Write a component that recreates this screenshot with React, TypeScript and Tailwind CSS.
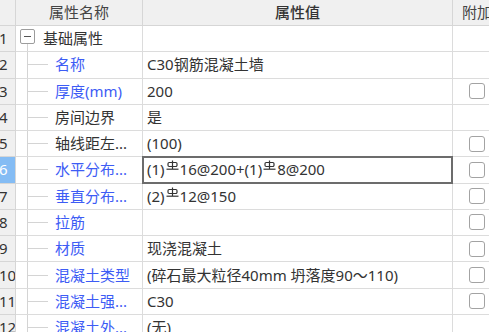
import React from "react";

type Row = {
  no: number;
  name: string;
  blue?: boolean;
  value: React.ReactNode;
  check?: boolean;
  group?: boolean;
};

// little HRB400 rebar mark, drawn because no font has it
const Rebar = () => (
  <svg width="13" height="11" viewBox="0 0 13 11" className="inline-block -translate-y-[4px] mx-[1px]">
    <path d="M6.5 0.5V9" stroke="#333" strokeWidth="1.2" fill="none" />
    <rect x="2" y="2.5" width="9" height="4" rx="1.2" stroke="#333" strokeWidth="1.2" fill="none" />
    <path d="M0.5 9.2H12.5" stroke="#333" strokeWidth="1.2" fill="none" />
  </svg>
);

const rows: Row[] = [
  { no: 1, name: "基础属性", value: "", group: true },
  { no: 2, name: "名称", blue: true, value: "C30钢筋混凝土墙" },
  { no: 3, name: "厚度(mm)", blue: true, value: "200", check: true },
  { no: 4, name: "房间边界", value: "是" },
  { no: 5, name: "轴线距左...", value: "(100)", check: true },
  {
    no: 6,
    name: "水平分布...",
    blue: true,
    value: (
      <>
        (1)<Rebar />16@200+(1)<Rebar />8@200
      </>
    ),
    check: true,
  },
  {
    no: 7,
    name: "垂直分布...",
    blue: true,
    value: (
      <>
        (2)<Rebar />12@150
      </>
    ),
    check: true,
  },
  { no: 8, name: "拉筋", blue: true, value: "", check: true },
  { no: 9, name: "材质", blue: true, value: "现浇混凝土", check: true },
  { no: 10, name: "混凝土类型", blue: true, value: "(碎石最大粒径40mm 坍落度90～110)", check: true },
  { no: 11, name: "混凝土强...", blue: true, value: "C30", check: true },
  { no: 12, name: "混凝土外...", blue: true, value: "(无)" },
];

const App = () => {
  const selected = 6;
  return (
    <div className="w-[489px] h-[332px] overflow-hidden bg-white text-[15px] text-[#333] font-['Noto_Sans','Noto_Sans_CJK_SC',sans-serif] leading-none">
      {/* header */}
      <div className="flex h-[26px] bg-[#f0f0f0] border-b border-[#d6d6d6]">
        <div className="w-[16px] shrink-0 border-r border-[#d6d6d6]" />
        <div className="w-[127px] shrink-0 border-r border-[#d6d6d6] flex items-center justify-center text-[#444]">
          属性名称
        </div>
        <div className="w-[310px] shrink-0 border-r border-[#d6d6d6] flex items-center justify-center text-[#333] font-medium">
          属性值
        </div>
        <div className="w-[48px] shrink-0 flex items-center justify-center text-[#444]">附加</div>
      </div>

      {rows.map((r) => (
        <div key={r.no} className="flex h-[26.27px]">
          <div
            className={
              r.no === selected
                ? "w-[16px] shrink-0 border-r border-b border-[#d6d6d6] bg-[#84bcf4] text-white flex items-center overflow-hidden"
                : "w-[16px] shrink-0 border-r border-b border-[#d6d6d6] bg-[#f0f0f0] flex items-center overflow-hidden"
            }
          >
            <span className="-ml-[1px]">{r.no}</span>
          </div>

          <div className="w-[127px] shrink-0 border-r border-b border-[#dcdcdc] flex items-stretch overflow-hidden whitespace-nowrap">
            {r.group ? (
              <>
                <div className="ml-[4px] w-[15px] flex flex-col items-center pt-[3px]">
                  <div className="w-[15px] h-[15px] border border-[#9c9c9c] rounded-[2px] flex items-center justify-center bg-white">
                    <div className="w-[7px] h-px bg-[#555]" />
                  </div>
                  <div className="flex-1 w-px bg-[#d4d4d4]" />
                </div>
                <div className="ml-[8px] flex items-center">{r.name}</div>
              </>
            ) : (
              <>
                <div className="ml-[11px] w-[21px] border-l border-[#d4d4d4] flex items-center">
                  <div className="w-[20px] h-px bg-[#d4d4d4]" />
                </div>
                <div className={r.blue ? "ml-[7px] flex items-center text-[#3d5cf5]" : "ml-[7px] flex items-center text-[#333]"}>
                  {r.name}
                </div>
              </>
            )}
          </div>

          <div className="relative w-[310px] shrink-0 border-r border-b border-[#dcdcdc] flex items-center pl-[4px] whitespace-nowrap">
            {r.value}
            {r.no === selected && (
              <div className="absolute -left-[1px] -top-[1px] -right-[1px] -bottom-[1px] border-2 border-[#6c6c6c]" />
            )}
          </div>

          <div className="w-[48px] shrink-0 border-b border-[#dcdcdc] flex items-center justify-center">
            {r.check && <div className="w-[16px] h-[16px] border-[1.5px] border-[#a3a3a3] rounded-[3px] bg-white" />}
          </div>
        </div>
      ))}
    </div>
  );
};

export default App;
